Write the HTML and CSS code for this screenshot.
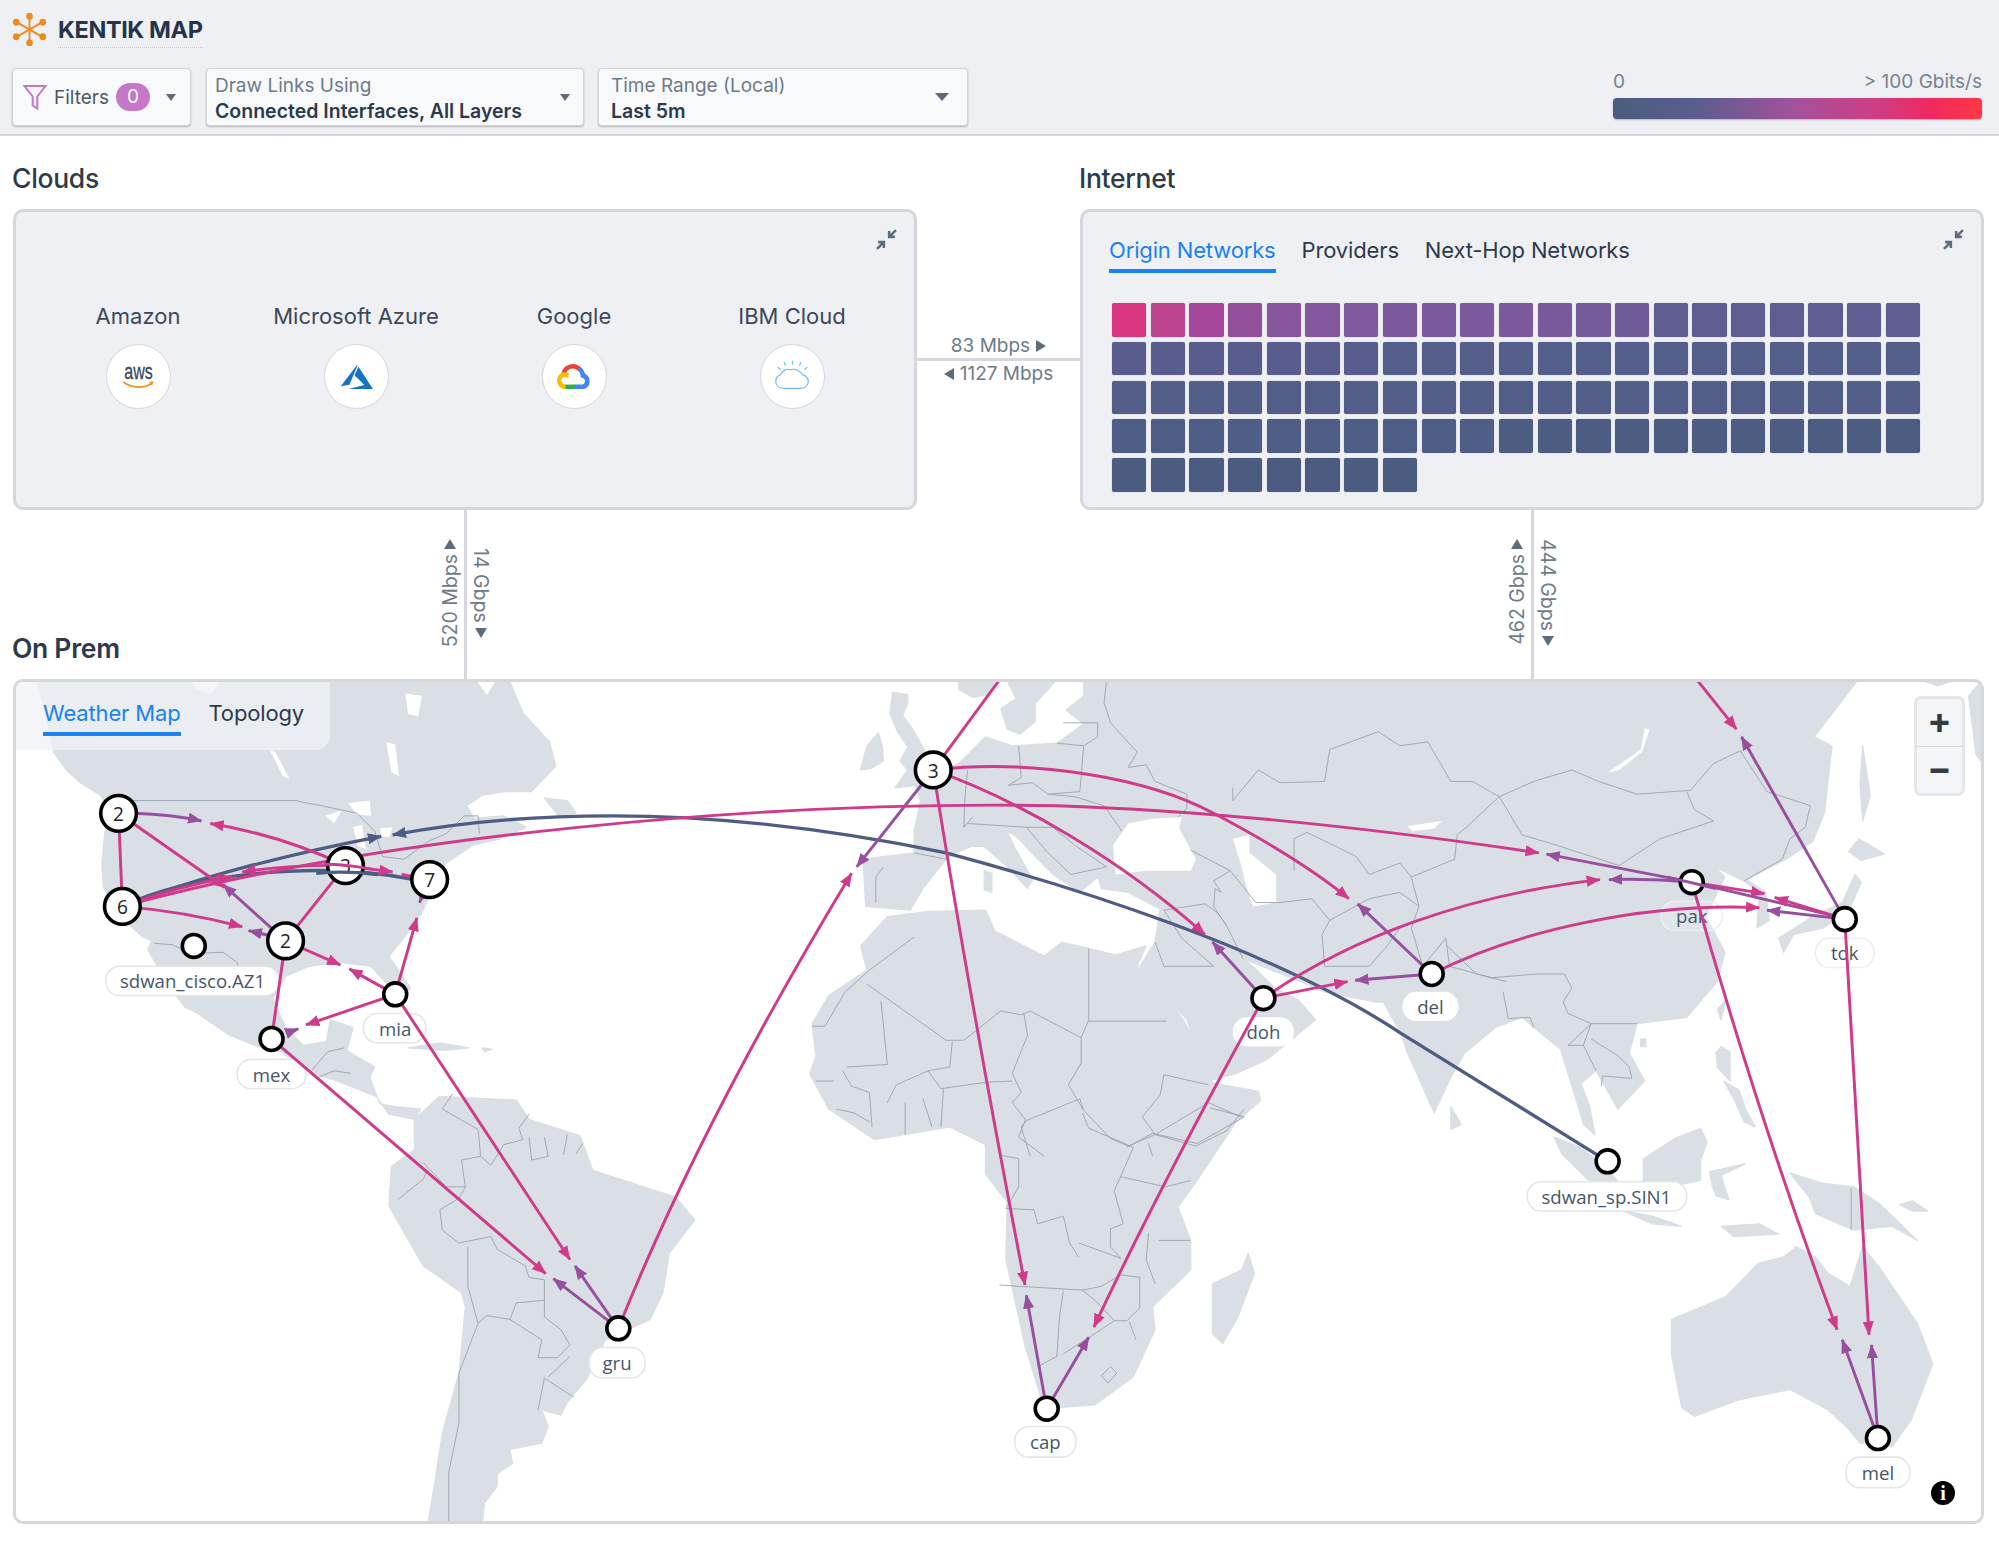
FILE: index.html
```html
<!DOCTYPE html>
<html lang="en">
<head>
    <meta charset="UTF-8">
    <meta name="viewport" content="width=device-width, initial-scale=1.0">
    <title>Kentik Map</title>
    <link rel="stylesheet" href="styles.css">
</head>
<body>
    <header class="topbar">
        <div class="brand">
            <svg class="logo" viewBox="0 0 36 36">
                <g stroke="#f08a1d" stroke-width="2" fill="#f08a1d">
                    <line x1="18" y1="3" x2="18" y2="33"/>
                    <line x1="4" y1="10" x2="32" y2="26"/>
                    <line x1="32" y1="10" x2="4" y2="26"/>
                    <ellipse cx="18" cy="3.500" rx="2.600" ry="3"/>
                    <ellipse cx="18" cy="32.500" rx="2.600" ry="3"/>
                    <ellipse cx="3.500" cy="10" rx="2.600" ry="2.800"/>
                    <ellipse cx="32.500" cy="10" rx="2.600" ry="2.800"/>
                    <ellipse cx="3.500" cy="26" rx="2.600" ry="2.800"/>
                    <ellipse cx="32.500" cy="26" rx="2.600" ry="2.800"/>
                </g>
            </svg>
            <span class="brand-name">KENTIK MAP</span>
        </div>
        <div class="controls">
            <div class="control control-filters">
                <svg class="funnel" viewBox="0 0 24 26"><path d="M1.500 2h21l-8.200 10.500v12l-4.600-3v-9z" fill="none" stroke="#c477c8" stroke-width="2"/></svg>
                <span class="filters-label">Filters</span>
                <span class="badge">0</span>
                <span class="caret caret-small"></span>
            </div>
            <div class="control control-links">
                <div class="control-text">
                    <span class="control-label">Draw Links Using</span>
                    <span class="control-value">Connected Interfaces, All Layers</span>
                </div>
                <span class="caret caret-small"></span>
            </div>
            <div class="control control-time">
                <div class="control-text">
                    <span class="control-label">Time Range (Local)</span>
                    <span class="control-value">Last 5m</span>
                </div>
                <span class="caret"></span>
            </div>
            <div class="legend">
                <div class="legend-labels"><span>0</span><span>&gt; 100 Gbits/s</span></div>
                <div class="legend-bar"></div>
            </div>
        </div>
    </header>

    <main class="page">
        <div class="top-row">
            <section class="block">
                <h2 class="block-title">Clouds</h2>
                <div class="panel clouds">
                    <svg class="collapse" viewBox="0 0 20 20"><path d="M19 1l-6 6M12.500 2V7.500H18M1 19l6-6M7.500 18V12.500H2" fill="none" stroke="#5d6b7a" stroke-width="2.400"/></svg>
                    <div class="cloud-item">
                        <span class="cloud-name">Amazon</span>
                        <span class="cloud-icon">
                            <svg viewBox="0 0 64 64">
                                <text x="17.500" y="35" class="aws-text" textLength="29" lengthAdjust="spacingAndGlyphs">aws</text>
                                <path d="M16.500 37.500c8 6.500 21 7 29 1.500" fill="none" stroke="#f29111" stroke-width="1.800"/>
                                <path d="M42.500 37.500l5-.8-1.800 4.500z" fill="#f29111"/>
                            </svg>
                        </span>
                    </div>
                    <div class="cloud-item">
                        <span class="cloud-name">Microsoft Azure</span>
                        <span class="cloud-icon">
                            <svg viewBox="0 0 64 64">
                                <path d="M32.700 20L16 42l8.800-1.500L33 21z" fill="#1474c4"/>
                                <path d="M34 22l14.700 22.700H23.700L40 40.700 30 30.700z" fill="#1474c4"/>
                            </svg>
                        </span>
                    </div>
                    <div class="cloud-item">
                        <span class="cloud-name">Google</span>
                        <span class="cloud-icon">
                            <svg viewBox="0 0 64 64" fill="none" stroke-width="4.600">
                                <path d="M21 29A9.500 9.500 0 0 1 37 24.500" stroke="#ea4335"/>
                                <path d="M36.500 24A9 9 0 0 1 40.500 31 6 6 0 0 1 41 42.500H32" stroke="#4285f4"/>
                                <path d="M32.500 42.500H22" stroke="#34a853"/>
                                <path d="M23 42.500A6.500 6.500 0 0 1 20.500 30L26 31" stroke="#fbbc05"/>
                            </svg>
                        </span>
                    </div>
                    <div class="cloud-item">
                        <span class="cloud-name">IBM Cloud</span>
                        <span class="cloud-icon">
                            <svg viewBox="0 0 64 64">
                                <path d="M23 44c-5 0-8-3-8-7 0-3 2-6 5-7 2-4 6-6 10-5 5-1 10 1 12 5 4 1 6 4 6 7 0 4-3 7-7 7z" fill="none" stroke="#79bdf0" stroke-width="1.300"/>
                                <path d="M32 20v-4M25 21l-1.500-3.500M39 21l1.500-3.500M20 25l-3-2.500M44 25l3-2.500" stroke="#6cc3e8" stroke-width="1.300" fill="none"/>
                            </svg>
                        </span>
                    </div>
                </div>
            </section>

            <div class="h-link">
                <span class="h-link-label">83 Mbps <svg class="tri" viewBox="0 0 10 12"><path d="M0 0l10 6-10 6z"/></svg></span>
                <span class="h-link-line"></span>
                <span class="h-link-label"><svg class="tri" viewBox="0 0 10 12"><path d="M10 0L0 6l10 6z"/></svg> 1127 Mbps</span>
            </div>

            <section class="block">
                <h2 class="block-title">Internet</h2>
                <div class="panel internet">
                    <svg class="collapse" viewBox="0 0 20 20"><path d="M19 1l-6 6M12.500 2V7.500H18M1 19l6-6M7.500 18V12.500H2" fill="none" stroke="#5d6b7a" stroke-width="2.400"/></svg>
                    <div class="tabs">
                        <span class="tab active">Origin Networks</span>
                        <span class="tab">Providers</span>
                        <span class="tab">Next-Hop Networks</span>
                    </div>
                    <div class="cells">
                        <i class="t1"></i><i class="t2"></i><i class="t3"></i><i class="t4"></i><i class="t5"></i><i class="t6"></i><i class="t7"></i><i class="t8"></i><i class="t8"></i><i class="t8"></i><i class="t8"></i><i class="t9"></i><i class="t10"></i><i class="t11"></i><i class="s1"></i><i class="s1"></i><i class="s1"></i><i class="s1"></i><i class="s1"></i><i class="s1"></i><i class="s1"></i>
                        <i class="s2"></i><i class="s2"></i><i class="s2"></i><i class="s2"></i><i class="s2"></i><i class="s2"></i><i class="s2"></i><i class="s3"></i><i class="s3"></i><i class="s3"></i><i class="s3"></i><i class="s3"></i><i class="s3"></i><i class="s3"></i><i class="s3"></i><i class="s3"></i><i class="s3"></i><i class="s3"></i><i class="s3"></i><i class="s3"></i><i class="s3"></i>
                        <i class="s4"></i><i class="s4"></i><i class="s4"></i><i class="s4"></i><i class="s4"></i><i class="s4"></i><i class="s4"></i><i class="s4"></i><i class="s4"></i><i class="s4"></i><i class="s4"></i><i class="s4"></i><i class="s4"></i><i class="s4"></i><i class="s4"></i><i class="s4"></i><i class="s4"></i><i class="s4"></i><i class="s4"></i><i class="s4"></i><i class="s4"></i>
                        <i class="s5"></i><i class="s5"></i><i class="s5"></i><i class="s5"></i><i class="s5"></i><i class="s5"></i><i class="s5"></i><i class="s5"></i><i class="s5"></i><i class="s5"></i><i class="s6"></i><i class="s6"></i><i class="s6"></i><i class="s6"></i><i class="s6"></i><i class="s6"></i><i class="s6"></i><i class="s6"></i><i class="s6"></i><i class="s6"></i><i class="s6"></i>
                        <i class="s7"></i><i class="s7"></i><i class="s7"></i><i class="s7"></i><i class="s7"></i><i class="s7"></i><i class="s7"></i><i class="s7"></i>
                    </div>
                </div>
            </section>
        </div>

        <div class="mid-row">
            <h2 class="block-title onprem-title">On Prem</h2>
            <div class="v-link v-link-clouds">
                <span class="v-label v-label-up"><svg class="tri" viewBox="0 0 12 10"><path d="M0 10L6 0l6 10z"/></svg><b>520 Mbps</b></span>
                <span class="v-line"></span>
                <span class="v-label v-label-down v-label-short"><b>14 Gbps</b><svg class="tri" viewBox="0 0 12 10"><path d="M0 0l6 10 6-10z"/></svg></span>
            </div>
            <div class="v-link v-link-internet">
                <span class="v-label v-label-up"><svg class="tri" viewBox="0 0 12 10"><path d="M0 10L6 0l6 10z"/></svg><b>462 Gbps</b></span>
                <span class="v-line"></span>
                <span class="v-label v-label-down"><b>444 Gbps</b><svg class="tri" viewBox="0 0 12 10"><path d="M0 0l6 10 6-10z"/></svg></span>
            </div>
        </div>

        <section class="panel map-panel">
            <svg class="world" viewBox="12.55 535 1541.3 658.1" preserveAspectRatio="none">
                <defs>
                    <marker id="head-pink" viewBox="0 0 10 8" refX="9.500" refY="4" markerWidth="11" markerHeight="9" markerUnits="userSpaceOnUse" orient="auto"><path d="M0 0l10 4-10 4z" fill="#cf3a8a"/></marker>
                    <marker id="head-purple" viewBox="0 0 10 8" refX="9.500" refY="4" markerWidth="11" markerHeight="9" markerUnits="userSpaceOnUse" orient="auto"><path d="M0 0l10 4-10 4z" fill="#974f9f"/></marker>
                    <marker id="head-slate" viewBox="0 0 10 8" refX="9.500" refY="4" markerWidth="11" markerHeight="9" markerUnits="userSpaceOnUse" orient="auto"><path d="M0 0l10 4-10 4z" fill="#4f5d85"/></marker>
                </defs>

                <g class="land">
                    <!-- north america -->
                    <path d="M28 530L36 560 42 590 52 604 63 614 79 624 85 634 82 655 80 677 81 696 95 720 112 735 119 738 116 745 130 770 145 790 155 795 180 812 205 822 220 825 245 842 265 848 295 860 305 874 325 878 330 870 310 868 298 866 290 845 294 837 272 824 277 806 259 800 256 817 238 820 224 806 214 783 224 766 242 758 266 755 291 758 301 769 315 783 322 775 305 750 315 738 331 716 336 705 350 677 371 663 392 658 413 649 395 640 372 642 366 632 378 624 396 621 417 621 436 601 431 582 410 559 398 530z"/>
                    <path d="M427 626L445 628 452 638 438 640z"/>
                    <!-- south america -->
                    <path d="M345 860L405 863 415 878 455 891 465 918 505 931 530 939 545 957 525 983 520 1014 510 1035 475 1051 460 1082 445 1100 440 1110 425 1106 430 1119 425 1132 400 1137 402 1148 390 1156 390 1166 380 1179 378 1198 335 1198 340 1169 347 1124 360 1077 365 1025 362 1014 332 993 305 946 307 915 325 902 325 878z"/>
                    <!-- africa -->
                    <path d="M696 719L675 742 680 761 650 781 637 803 640 829 635 842 650 870 686 894 745 884 773 898 773 921 790 943 789 988 796 1020 804 1056 814 1088 819 1105 859 1102 889 1080 906 1043 904 1025 934 996 934 973 924 947 939 926 969 881 989 863 987 856 959 851 948 848 945 828 925 795 905 770 892 758 899 742 875 749 833 739 819 750 780 730 777 722 773 714 728 715z"/>
                    <!-- eurasia -->
                    <path d="M850 530L850 546 836 557 850 568 829 583 794 585 773 578 752 599 717 613 722 628 717 652 717 669 677 674 679 711 714 714 724 697 742 674 752 668 762 664 772 664 790 680 806 697 810 690 796 665 790 652 797 656 812 672 826 686 847 700 861 688 864 697 885 700 910 713 906 739 894 758 911 778 931 800 948 848 970 842 994 831 1032 800 1018 784 1000 775 985 760 975 752 995 760 1020 770 1039 778 1078 786 1085 786 1098 809 1104 826 1125 873 1138 845 1149 826 1173 806 1194 798 1203 806 1224 823 1237 865 1242 882 1251 890 1247 868 1240 850 1252 840 1269 870 1290 848 1278 826 1284 803 1323 798 1347 770 1353 747 1338 719 1353 688 1345 680 1368 691 1380 700 1378 728 1388 722 1385 700 1370 690 1401 674 1422 660 1431 638 1437 585 1423 578 1460 530z"/>
                    <path d="M752 530L752 541 763 547 775 545 783 530z"/>
                    <path d="M788 530L797 548 785 556 790 572 800 576 812 566 812 552 822 541 832 530z"/>
                    <!-- islands -->
                    <path d="M700 543L712 545 712 552 708 561 716 572 726 590 745 605 738 612 720 616 702 618 712 604 706 597 712 586 704 574 698 560z"/>
                    <path d="M675 604L680 585 689 575 692 585 693 597 683 603z"/>
                    <path d="M1544 546L1556 532V600L1550 592z"/>
                    <path d="M1508 534H1532L1520 538z"/>
                    <path d="M772 683L778 685 778 700 772 698z"/>
                    <path d="M979 983L984 999 971 1033 959 1054 951 1046 951 1007 974 996z"/>
                    <path d="M1138 868L1146 882 1138 886z"/>
                    <path d="M1347 792L1354 784 1350 800z"/>
                    <path d="M1287 815L1291 815 1291 821 1287 821z"/>
                    <path d="M1350 821L1357 825 1357 848 1347 837 1346 826z"/>
                    <path d="M1352 848L1364 855 1370 872 1377 884 1368 880 1360 862z"/>
                    <path d="M1219 892L1240 900 1264 920 1275 935 1282 946 1268 940 1245 925 1225 905z"/>
                    <path d="M1274 950L1296 954 1319 962 1296 960z"/>
                    <path d="M1289 909L1314 893 1334 885 1339 896 1334 910 1334 926 1314 930 1289 926z"/>
                    <path d="M1341 919L1369 913 1350 922 1356 941 1346 938 1343 930z"/>
                    <path d="M1404 920L1429 928 1454 931 1474 944 1504 973 1484 962 1454 965 1424 952 1419 939z"/>
                    <path d="M1490 945L1500 942 1512 950 1500 950z"/>
                    <path d="M1409 978L1424 986 1434 999 1451 1009 1461 978 1474 994 1504 1038 1516 1070 1499 1114 1484 1135 1459 1132 1449 1120 1434 1106 1404 1090 1364 1098 1329 1111 1319 1104 1311 1062 1311 1035 1354 1017 1379 991 1399 986z"/>
                    <path d="M1455 686L1445 708 1422 719 1395 736 1399 747 1407 733 1430 728 1450 715 1460 692z"/>
                    <path d="M1458 658L1470 665 1478 670 1460 675 1450 668z"/>
                    <path d="M1461 585L1467 624 1461 644 1459 615z"/>
                    <path d="M320 822L345 818 368 822 348 824z"/>
                    <path d="M378 822L386 823 380 825z"/>
                    <path d="M1350 962L1380 960 1395 968 1360 970z"/>
                </g>

                <g class="water">
                    <path d="M318 544L331 546 328 562 320 560z"/>
                    <path d="M303 582L310 584 313 609 307 606z"/>
                    <path d="M212 589L216 590 227 611 222 609z"/>
                    <path d="M150 532L175 532 165 545 152 540z"/>
                    <path d="M372 532L390 532 382 545z"/>
                    <path d="M273 630L290 628 291 640 280 639z"/>
                    <path d="M277 649L284 647 287 666 281 664z"/>
                    <path d="M298 650L308 649 305 657 299 656z"/>
                    <path d="M255 640L268 636 262 646z"/>
                    <path d="M873 663L885 646 905 642 927 641 925 650 938 674 934 683 899 683 875 686z"/>
                    <path d="M967 658L980 655 980 669 1001 686 1001 708 983 711 978 697 973 677z"/>
                    <path d="M1104 648L1131 644 1125 650 1108 652z"/>
                    <path d="M1290 571L1287 588 1261 606 1270 604 1288 590 1294 572z"/>
                </g>

                <g class="borders">
                    <path d="M102 628H233L236 629 252 632 280 638 294 652 300 672 317 674 336 660 350 654 364 640 375 640 376 654"/>
                    <path d="M121 740L135 741 150 748 175 747 186 755 187 761"/>
                    <path d="M245 839L257 825 270 822M250 845L262 840 275 842"/>
                    <path d="M355 858L347 870 375 886 377 907 385 914 395 898 410 894 407 885 415 874"/>
                    <path d="M415 892L417 910 430 907 427 892M442 906L445 890M452 905L457 897"/>
                    <path d="M377 907L362 910 365 931 350 931 332 912M335 918L332 925 312 941"/>
                    <path d="M365 931L360 940 345 949 347 965 360 975 385 970 390 980 412 993 415 1002 427 1004 427 1020"/>
                    <path d="M427 1020L405 1022 400 1035 425 1051 422 1065 437 1065 447 1055 440 1043 427 1033 427 1020"/>
                    <path d="M367 978L367 1009 375 1038 360 1077 360 1116 352 1155 352 1198M375 1038L382 1032 400 1035"/>
                    <path d="M427 1081L422 1106M427 1081L450 1096M447 1064L430 1080"/>
                    <path d="M717 735L682 761 663 778 647 805 637 805M691 785L696 835 664 837"/>
                    <path d="M680 772L742 816 756 816 785 793 801 796 808 793 848 814 854 800 854 744M854 801H915"/>
                    <path d="M747 817L745 837 728 840 703 851 696 865M728 840L738 854 773 849 794 848"/>
                    <path d="M803 795L806 812 794 842 801 857 794 865 805 879 801 884 808 907"/>
                    <path d="M848 814L848 834 838 851 850 871 871 893M805 879L847 862 850 871"/>
                    <path d="M913 843L910 859 896 876 906 890 885 899 871 893M913 843L948 851"/>
                    <path d="M948 865L973 876M976 870L962 887 938 899 906 890M948 865L906 890"/>
                    <path d="M661 840L668 852 682 857 684 884M640 848H654M710 865V890M724 862L731 884M740 854L738 884M656 870L670 873 682 880"/>
                    <path d="M804 879L799 892 819 907M784 906L799 909 799 931 789 948 811 949 814 960 834 954 839 975 846 986"/>
                    <path d="M784 1008L799 1009 849 1012M834 1013L831 1033 829 1064 814 1072"/>
                    <path d="M849 873L854 885 889 900 879 923 874 934 881 960 871 964 871 978 879 987 846 975"/>
                    <path d="M879 923L914 931 934 926M901 897L904 907M949 869L976 876 939 897 904 889 884 900"/>
                    <path d="M849 1012L864 1009 879 1000 894 1002 894 1026 884 1036 874 1036 859 1020 849 1012M909 973L934 973M901 967L899 988 906 1007"/>
                    <path d="M874 1036L856 1048 834 1062M886 1037L891 1051M871 1072L876 1077 869 1085 864 1079z"/>
                    <path d="M759 604L757 624 756 649 763 641M799 585L801 610 791 616 810 614 822 623M850 585L847 621 822 623"/>
                    <path d="M834 567H861V578L850 585 829 583M868 534L866 551 871 567 892 590 885 602 899 600 906 613 931 623 931 634 924 641"/>
                    <path d="M822 623L843 625 866 632 880 652M693 680L687 688 687 708M717 669L742 674"/>
                    <path d="M805 649H826L843 663 868 680 840 686 822 669 805 649M759 646L805 649"/>
                    <path d="M913 714L945 709 955 716 962 726M927 736L952 758 913 758 906 739M927 736L913 714"/>
                    <path d="M934 667L965 683 952 691 958 700 953 697 952 711M952 711L962 726 975 752"/>
                    <path d="M1004 708L1029 705 1043 722 1037 733 1039 758 1074 758 1088 742 1098 728M965 683L985 708 1004 708"/>
                    <path d="M1015 683V658L1025 653 1046 663 1064 672 1074 686 1098 677 1107 688 1113 711"/>
                    <path d="M967 618V628L987 604 1004 614 1039 613 1043 588 1081 574 1098 585 1120 582 1138 613 1155 613 1176 625"/>
                    <path d="M1176 625L1150 649 1143 655 1141 674 1107 688M1043 722L1074 705 1098 700 1113 711 1107 728 1116 758 1134 736"/>
                    <path d="M1176 625L1203 613 1233 604 1254 613 1284 623 1326 620 1344 599 1365 589 1386 621 1420 632 1416 649 1404 658 1398 674 1368 691"/>
                    <path d="M1176 625L1194 655 1221 663 1270 679 1302 658 1344 644 1329 635 1323 621"/>
                    <path d="M1134 736L1137 758 1170 767 1206 764 1227 764 1233 775 1226 786 1230 795 1248 803 1230 820 1242 820 1248 803 1284 803"/>
                    <path d="M1135 742L1158 764 1182 770M1179 778L1183 799 1200 798 1203 806"/>
                    <path d="M1248 815L1269 828 1278 837 1280 846 1257 844 1256 852M1242 820L1252 840"/>
                    <path d="M1452 932V965"/>
                </g>

                <g class="pills">
                    <rect x="83" y="758" width="136" height="23" rx="11"/>
                    <text x="151" y="769.500">sdwan_cisco.AZ1</text>
                    <rect x="285" y="795" width="49" height="23" rx="11"/>
                    <text x="310" y="806.500">mia</text>
                    <rect x="186" y="831" width="54" height="23" rx="11"/>
                    <text x="213" y="842.500">mex</text>
                    <rect class="plain" x="967" y="798" width="48" height="23" rx="11"/>
                    <text x="991" y="809.500">doh</text>
                    <rect class="plain" x="1100" y="778" width="44" height="23" rx="11"/>
                    <text x="1122" y="789.500">del</text>
                    <rect class="clear" x="1303" y="707" width="48" height="23" rx="11"/>
                    <text x="1327" y="718.500">pak</text>
                    <rect class="clear" x="1424" y="736" width="46" height="23" rx="11"/>
                    <text x="1447" y="747.500">tok</text>
                    <rect x="1198" y="927" width="125" height="23" rx="11"/>
                    <text x="1260" y="938.500">sdwan_sp.SIN1</text>
                    <rect x="462" y="1057" width="44" height="24" rx="11"/>
                    <text x="484" y="1069">gru</text>
                    <rect x="796" y="1119" width="48" height="24" rx="11"/>
                    <text x="820" y="1131">cap</text>
                    <rect x="1448" y="1143" width="50" height="24" rx="11"/>
                    <text x="1473" y="1155">mel</text>
                </g>

                <g class="links links-slate">
                    <path d="M96 711C150 690 225 670 299 656" marker-end="url(#head-slate)"/>
                    <path d="M96 711C150 685 250 675 325 690"/>
                    <path d="M1261 911L1098 810C1000 745 840 695 742 669 650 650 560 640 480 640 420 640 360 645 308 655" marker-end="url(#head-slate)"/>
                </g>
                <g class="links links-purple">
                    <path d="M105 638Q135 639 158 644" marker-end="url(#head-purple)"/>
                    <path d="M224 738L175 694" marker-end="url(#head-purple)"/>
                    <path d="M212 734L195 730" marker-end="url(#head-purple)"/>
                    <path d="M226 810L234 807" marker-end="url(#head-purple)"/>
                    <path d="M337 690L329 708" marker-end="url(#head-purple)"/>
                    <path d="M485 1042L451 993" marker-end="url(#head-purple)"/>
                    <path d="M485 1042L434 1003" marker-end="url(#head-purple)"/>
                    <path d="M732 604L672 680" marker-end="url(#head-purple)"/>
                    <path d="M821 1105L805 1016" marker-end="url(#head-purple)"/>
                    <path d="M821 1105L854 1049" marker-end="url(#head-purple)"/>
                    <path d="M991 783L951 739" marker-end="url(#head-purple)"/>
                    <path d="M1123 764L1065 709" marker-end="url(#head-purple)"/>
                    <path d="M1123 764L1063 769" marker-end="url(#head-purple)"/>
                    <path d="M1327 692L1213 670" marker-end="url(#head-purple)"/>
                    <path d="M1327 692Q1295 689 1262 690" marker-end="url(#head-purple)"/>
                    <path d="M1327 692L1437 718"/>
                    <path d="M1447 721L1386 714" marker-end="url(#head-purple)"/>
                    <path d="M1447 721L1366 578" marker-end="url(#head-purple)"/>
                    <path d="M1473 1128L1445 1051" marker-end="url(#head-purple)"/>
                    <path d="M1473 1128L1468 1055" marker-end="url(#head-purple)"/>
                </g>
                <g class="links links-pink">
                    <path d="M271 679Q220 655 165 646" marker-end="url(#head-pink)"/>
                    <path d="M93 638L96 711"/>
                    <path d="M93 638L176 696" marker-end="url(#head-pink)"/>
                    <path d="M96 711C300 655 600 628 829 632 950 636 1080 650 1207 669" marker-end="url(#head-pink)"/>
                    <path d="M96 711Q140 695 182 688" marker-end="url(#head-pink)"/>
                    <path d="M271 679Q230 678 190 684" marker-end="url(#head-pink)"/>
                    <path d="M271 679L308 684" marker-end="url(#head-pink)"/>
                    <path d="M337 690L315 686"/>
                    <path d="M271 679L224 738"/>
                    <path d="M96 711Q145 715 190 727" marker-end="url(#head-pink)"/>
                    <path d="M224 738L267 757" marker-end="url(#head-pink)"/>
                    <path d="M310 780L274 760" marker-end="url(#head-pink)"/>
                    <path d="M224 738L213 815"/>
                    <path d="M310 780L327 720" marker-end="url(#head-pink)"/>
                    <path d="M310 780L240 804" marker-end="url(#head-pink)"/>
                    <path d="M310 780L447 988" marker-end="url(#head-pink)"/>
                    <path d="M213 815L428 999" marker-end="url(#head-pink)"/>
                    <path d="M485 1042Q550 880 668 685" marker-end="url(#head-pink)"/>
                    <path d="M732 604L785 532"/>
                    <path d="M732 604Q760 780 804 1008" marker-end="url(#head-pink)"/>
                    <path d="M732 604C810 595 900 610 952 638 990 658 1030 682 1058 705" marker-end="url(#head-pink)"/>
                    <path d="M732 604C800 628 880 675 945 733" marker-end="url(#head-pink)"/>
                    <path d="M991 783C1060 735 1150 702 1255 690" marker-end="url(#head-pink)"/>
                    <path d="M991 783L1057 770" marker-end="url(#head-pink)"/>
                    <path d="M1123 764C1190 730 1290 708 1380 712" marker-end="url(#head-pink)"/>
                    <path d="M1327 692L1384 701" marker-end="url(#head-pink)"/>
                    <path d="M1447 721L1392 704" marker-end="url(#head-pink)"/>
                    <path d="M1330 532L1362 572" marker-end="url(#head-pink)"/>
                    <path d="M991 783Q910 930 858 1041" marker-end="url(#head-pink)"/>
                    <path d="M1327 692Q1380 880 1441 1043" marker-end="url(#head-pink)"/>
                    <path d="M1447 721Q1456 880 1466 1047" marker-end="url(#head-pink)"/>
                </g>

                <g class="nodes">
                    <circle cx="93" cy="638" r="14"/><text x="93" y="638.500">2</text>
                    <circle cx="96" cy="711" r="14"/><text x="96" y="711.500">6</text>
                    <circle cx="271" cy="679" r="14"/><text x="271" y="679.500">3</text>
                    <circle cx="337" cy="690" r="14"/><text x="337" y="690.500">7</text>
                    <circle cx="224" cy="738" r="14"/><text x="224" y="738.500">2</text>
                    <circle cx="732" cy="604" r="14"/><text x="732" y="604.500">3</text>
                    <circle cx="152" cy="742" r="9"/>
                    <circle cx="310" cy="780" r="9"/>
                    <circle cx="213" cy="815" r="9"/>
                    <circle cx="991" cy="783" r="9"/>
                    <circle cx="1123" cy="764" r="9"/>
                    <circle cx="1327" cy="692" r="9"/>
                    <circle cx="1447" cy="721" r="9"/>
                    <circle cx="1261" cy="911" r="9"/>
                    <circle cx="485" cy="1042" r="9"/>
                    <circle cx="821" cy="1105" r="9"/>
                    <circle cx="1473" cy="1128" r="9"/>
                </g>

                <!-- these run over the node circles in the real map -->
                <g class="links links-slate"><path d="M248 685Q272 683 296 686"/></g>
                <g class="links links-pink"><path d="M254 678Q272 678 292 682"/></g>
                <g class="links links-purple"><path d="M1308 688L1346 697"/></g>
            </svg>

            <div class="map-tabs">
                <span class="tab active">Weather Map</span>
                <span class="tab">Topology</span>
            </div>
            <div class="zoom">
                <span class="zoom-btn">+</span>
                <span class="zoom-btn">&minus;</span>
            </div>
            <span class="info">i</span>
        </section>
    </main>
</body>
</html>
```

FILE: styles.css
```css
* {
    box-sizing: border-box;
}
body {
    margin: 0;
    width: 1999px;
    background-color: #fff;
    color: #2d3a4b;
    font-family: Inter, "Liberation Sans", sans-serif;
}
.topbar {
    height: 136px;
    padding: 13px 17px 0 12px;
    background-color: #eff0f4;
    border-bottom: 2px solid #d5d7dc;
}
.brand {
    display: flex;
    align-items: flex-start;
    gap: 11px;
    height: 55px;
}
.logo {
    width: 35px;
    height: 33px;
}
.brand-name {
    margin-top: 2px;
    padding-bottom: 3px;
    font-size: 23.500px;
    font-weight: 700;
    letter-spacing: -0.4px;
    color: #24344a;
    border-bottom: 1px dotted #c5c9d0;
}
.controls {
    display: flex;
    gap: 14px;
}
.control {
    display: flex;
    align-items: center;
    height: 58px;
    padding: 0 13px 0 8px;
    background-color: #f8f9fb;
    border: 1px solid #d2d5da;
    border-radius: 4px;
    box-shadow: 0 1px 2px rgba(0, 0, 0, 0.25);
}
.control-filters {
    width: 179px;
    padding-left: 10px;
}
.control-links {
    width: 378px;
    margin-left: 1px;
    justify-content: space-between;
}
.control-time {
    width: 370px;
    justify-content: space-between;
    padding-right: 18px;
    padding-left: 12px;
}
.funnel {
    width: 24px;
    height: 26px;
    margin-right: 7px;
}
.filters-label {
    font-size: 19px;
    color: #4a5868;
}
.badge {
    width: 34px;
    height: 28px;
    margin-left: 7px;
    border-radius: 14px;
    background-color: #c678c8;
    color: #fff;
    font-size: 19px;
    line-height: 28px;
    text-align: center;
}
.caret {
    width: 0;
    height: 0;
    border-left: 7px solid transparent;
    border-right: 7px solid transparent;
    border-top: 8px solid #5d6b7a;
}
.caret-small {
    margin-left: 16px;
    border-left-width: 5px;
    border-right-width: 5px;
    border-top-width: 7px;
}
.control-text {
    display: flex;
    flex-direction: column;
    gap: 3px;
    padding-top: 2px;
}
.control-label {
    font-size: 19px;
    line-height: 22px;
    color: #6e7b89;
}
.control-value {
    font-size: 19.500px;
    line-height: 22px;
    font-weight: 600;
    color: #2d3a4b;
}
.legend {
    width: 369px;
    margin-left: auto;
    margin-top: 2px;
}
.legend-labels {
    display: flex;
    justify-content: space-between;
    font-size: 19px;
    line-height: 24px;
    color: #76838f;
}
.legend-bar {
    height: 21px;
    margin-top: 4px;
    border-radius: 4px;
    box-shadow: 0 1px 2px rgba(0, 0, 0, 0.25);
    background: linear-gradient(to right, #4a5d7e 0%, #5a5d8d 22%, #a4519a 50%, #d43a80 74%, #f0285f 86%, #ff3845 100%);
}
.page {
    padding: 0 15px 0 13px;
}
.top-row {
    display: grid;
    grid-template-columns: 904px 163px 904px;
}
.block-title {
    margin: 0;
    font-size: 26.500px;
    line-height: 32px;
    font-weight: 500;
    letter-spacing: -0.3px;
    color: #2d3a4b;
}
.block > .block-title {
    height: 73px;
    padding-top: 26px;
    margin-left: -1px;
}
.panel {
    position: relative;
    background-color: #eff0f4;
    border: 3px solid #d5d7dc;
    border-radius: 10px;
}
.clouds,
.internet {
    height: 301px;
}
.clouds {
    display: grid;
    grid-template-columns: repeat(4, 218px);
    padding: 89px 13px 0;
}
.cloud-item {
    display: flex;
    flex-direction: column;
    align-items: center;
}
.cloud-name {
    font-size: 22px;
    line-height: 30px;
    color: #3c4858;
}
.cloud-icon {
    width: 65px;
    height: 65px;
    margin-top: 13px;
    background-color: #fff;
    border: 1px solid #d5d7dc;
    border-radius: 50%;
}
.cloud-icon svg {
    display: block;
    width: 63px;
    height: 63px;
}
.aws-text {
    font-family: "Liberation Sans", sans-serif;
    font-size: 22px;
    font-weight: 400;
    fill: #36465a;
    stroke: #36465a;
    stroke-width: 0.300;
}
.collapse {
    position: absolute;
    top: 17px;
    right: 17px;
    width: 21px;
    height: 21px;
}
.tabs {
    display: flex;
    gap: 26px;
    padding: 23px 0 0 26px;
}
.tab {
    height: 38px;
    font-size: 22px;
    line-height: 30px;
    letter-spacing: -0.15px;
    color: #2d3a4b;
}
.tab.active {
    color: #1a82f2;
    border-bottom: 4px solid #1a82f2;
}
.cells {
    display: grid;
    grid-template-columns: repeat(21, 34.300px);
    grid-auto-rows: 33.500px;
    gap: 5.300px 4.400px;
    margin: 30px 0 0 29px;
}
.cells i {
    display: block;
    border-radius: 2px;
    box-shadow: 0 0 1px rgba(70, 80, 110, 0.5);
}
.t1 { background-color: #d93680; }
.t2 { background-color: #bd4590; }
.t3 { background-color: #a4479a; }
.t4 { background-color: #925099; }
.t5 { background-color: #86559c; }
.t6 { background-color: #82579d; }
.t7 { background-color: #7f599d; }
.t8 { background-color: #7c599c; }
.t9 { background-color: #785a9b; }
.t10 { background-color: #745b99; }
.t11 { background-color: #6f5b97; }
.s1 { background-color: #5e5c90; }
.s2 { background-color: #595d8e; }
.s3 { background-color: #545e8a; }
.s4 { background-color: #525e88; }
.s5 { background-color: #4f5e86; }
.s6 { background-color: #4d5d82; }
.s7 { background-color: #4c5b80; }
.h-link {
    display: flex;
    flex-direction: column;
    align-items: center;
    justify-content: center;
    padding-top: 73px;
}
.h-link-label {
    display: flex;
    align-items: center;
    gap: 6px;
    height: 25px;
    font-size: 19px;
    color: #6e7b89;
}
.tri {
    width: 10px;
    height: 12px;
    fill: #5d6b7a;
}
.h-link-line {
    align-self: stretch;
    height: 3px;
    background-color: #d5d7dc;
}
.mid-row {
    display: grid;
    grid-template-columns: 904px 163px 904px;
    height: 169px;
}
.onprem-title {
    grid-row: 1;
    grid-column: 1;
    align-self: end;
    margin: 0 0 15px -1px;
    font-weight: 600;
}
.v-link {
    grid-row: 1;
    display: flex;
    justify-self: center;
    height: 169px;
    gap: 2px;
}
.v-link-clouds {
    grid-column: 1;
}
.v-link-internet {
    grid-column: 3;
}
.v-line {
    width: 3px;
    background-color: #d5d7dc;
}
.v-label {
    display: flex;
    flex-direction: column;
    align-items: center;
    gap: 5px;
    width: 24px;
    padding-top: 29px;
    font-size: 19.500px;
    color: #6e7b89;
}
.v-label-short {
    padding-top: 38px;
}
.v-label b {
    font-weight: 400;
    writing-mode: vertical-rl;
}
.v-label-up b {
    transform: rotate(180deg);
}
.v-label .tri {
    width: 12px;
    height: 10px;
    flex: none;
}
.map-panel {
    height: 845px;
    background-color: #fff;
    overflow: hidden;
}
.world {
    display: block;
    width: 100%;
    height: 100%;
}
.land path {
    fill: #d9dfe5;
    stroke: #d9dfe5;
    stroke-width: 1;
    stroke-linejoin: round;
}
.water path {
    fill: #fff;
}
.borders path {
    fill: none;
    stroke: #97a3b0;
    stroke-width: 0.700;
    stroke-linejoin: round;
}
.pills rect {
    fill: #fff;
    stroke: #e3e5e9;
    stroke-width: 1.200;
}
.pills rect.plain {
    stroke: none;
}
.pills rect.clear {
    fill: rgba(255, 255, 255, 0.2);
    stroke: #eceef1;
}
.pills text {
    font-family: "Open Sans", sans-serif;
    font-size: 14.600px;
    fill: #46566a;
    text-anchor: middle;
    dominant-baseline: central;
}
.links path {
    fill: none;
    stroke-width: 2.300;
}
.links-pink path {
    stroke: #cf3a8a;
}
.links-purple path {
    stroke: #974f9f;
}
.links-slate path {
    stroke: #4f5d85;
    stroke-width: 2.600;
}
.nodes circle {
    fill: #fff;
    stroke: #000;
    stroke-width: 2.800;
}
.nodes text {
    font-family: "Open Sans", sans-serif;
    font-size: 15px;
    fill: #222;
    text-anchor: middle;
    dominant-baseline: central;
}
.map-tabs {
    position: absolute;
    top: 0;
    left: 0;
    display: flex;
    gap: 28px;
    width: 314px;
    height: 68px;
    padding: 16px 0 0 27px;
    background-color: rgba(239, 241, 245, 0.75);
    border-bottom-right-radius: 14px;
}
.zoom {
    position: absolute;
    top: 14px;
    right: 16px;
    display: flex;
    flex-direction: column;
    width: 51px;
    height: 100px;
    background-color: #f4f5f7;
    border: 3px solid #e4e6ea;
    border-radius: 7px;
}
.zoom-btn {
    flex: 1;
    font-size: 36px;
    line-height: 42px;
    font-weight: 700;
    text-align: center;
    color: #333c45;
}
.zoom-btn + .zoom-btn {
    border-top: 1px solid #d5d7dc;
}
.info {
    position: absolute;
    right: 26px;
    bottom: 16px;
    width: 24px;
    height: 24px;
    border-radius: 50%;
    background-color: #000;
    color: #fff;
    font-family: "Liberation Serif", serif;
    font-size: 20px;
    font-weight: 700;
    line-height: 24px;
    text-align: center;
}
```
